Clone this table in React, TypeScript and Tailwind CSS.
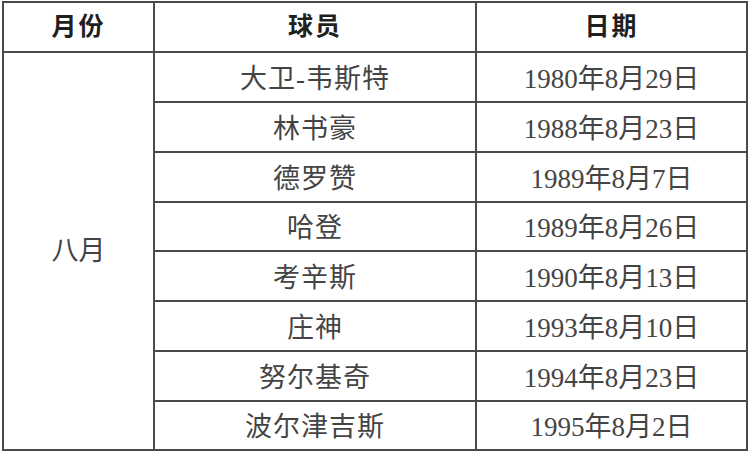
const rows = [
  { name: "大卫-韦斯特", date: "1980年8月29日" },
  { name: "林书豪", date: "1988年8月23日" },
  { name: "德罗赞", date: "1989年8月7日" },
  { name: "哈登", date: "1989年8月26日" },
  { name: "考辛斯", date: "1990年8月13日" },
  { name: "庄神", date: "1993年8月10日" },
  { name: "努尔基奇", date: "1994年8月23日" },
  { name: "波尔津吉斯", date: "1995年8月2日" },
];

const font = { fontFamily: '"Liberation Serif", "Noto Sans CJK SC", serif' };

export default function App() {
  return (
    <div className="w-[750px] h-[452px] bg-white pt-px pl-[2px]">
      <table className="border-collapse w-[746px] text-[#444]" style={font}>
        <thead>
          <tr className="h-[50px]">
            <th className="w-[151px] border-2 border-[#4a4a4a] text-[25px] font-bold text-[#1f1f1f] tracking-[2px]">月份</th>
            <th className="w-[322px] border-2 border-[#4a4a4a] text-[25px] font-bold text-[#1f1f1f] tracking-[2px]">球员</th>
            <th className="border-2 border-[#4a4a4a] text-[25px] font-bold text-[#1f1f1f] tracking-[2px]">日期</th>
          </tr>
        </thead>
        <tbody>
          {rows.map((r, i) => (
            <tr key={r.name} className={i === 3 || i === 7 ? "h-[49px]" : "h-[50px]"}>
              {i === 0 && (
                <td rowSpan={8} className="border-2 border-[#4a4a4a] text-center text-[27px] leading-none">
                  八月
                </td>
              )}
              <td className="border-2 border-[#4a4a4a] text-center text-[27px] leading-none pt-[4px] tracking-[1px]">{r.name}</td>
              <td className="border-2 border-[#4a4a4a] text-center text-[27px] leading-none pt-[4px]">{r.date}</td>
            </tr>
          ))}
        </tbody>
      </table>
    </div>
  );
}
